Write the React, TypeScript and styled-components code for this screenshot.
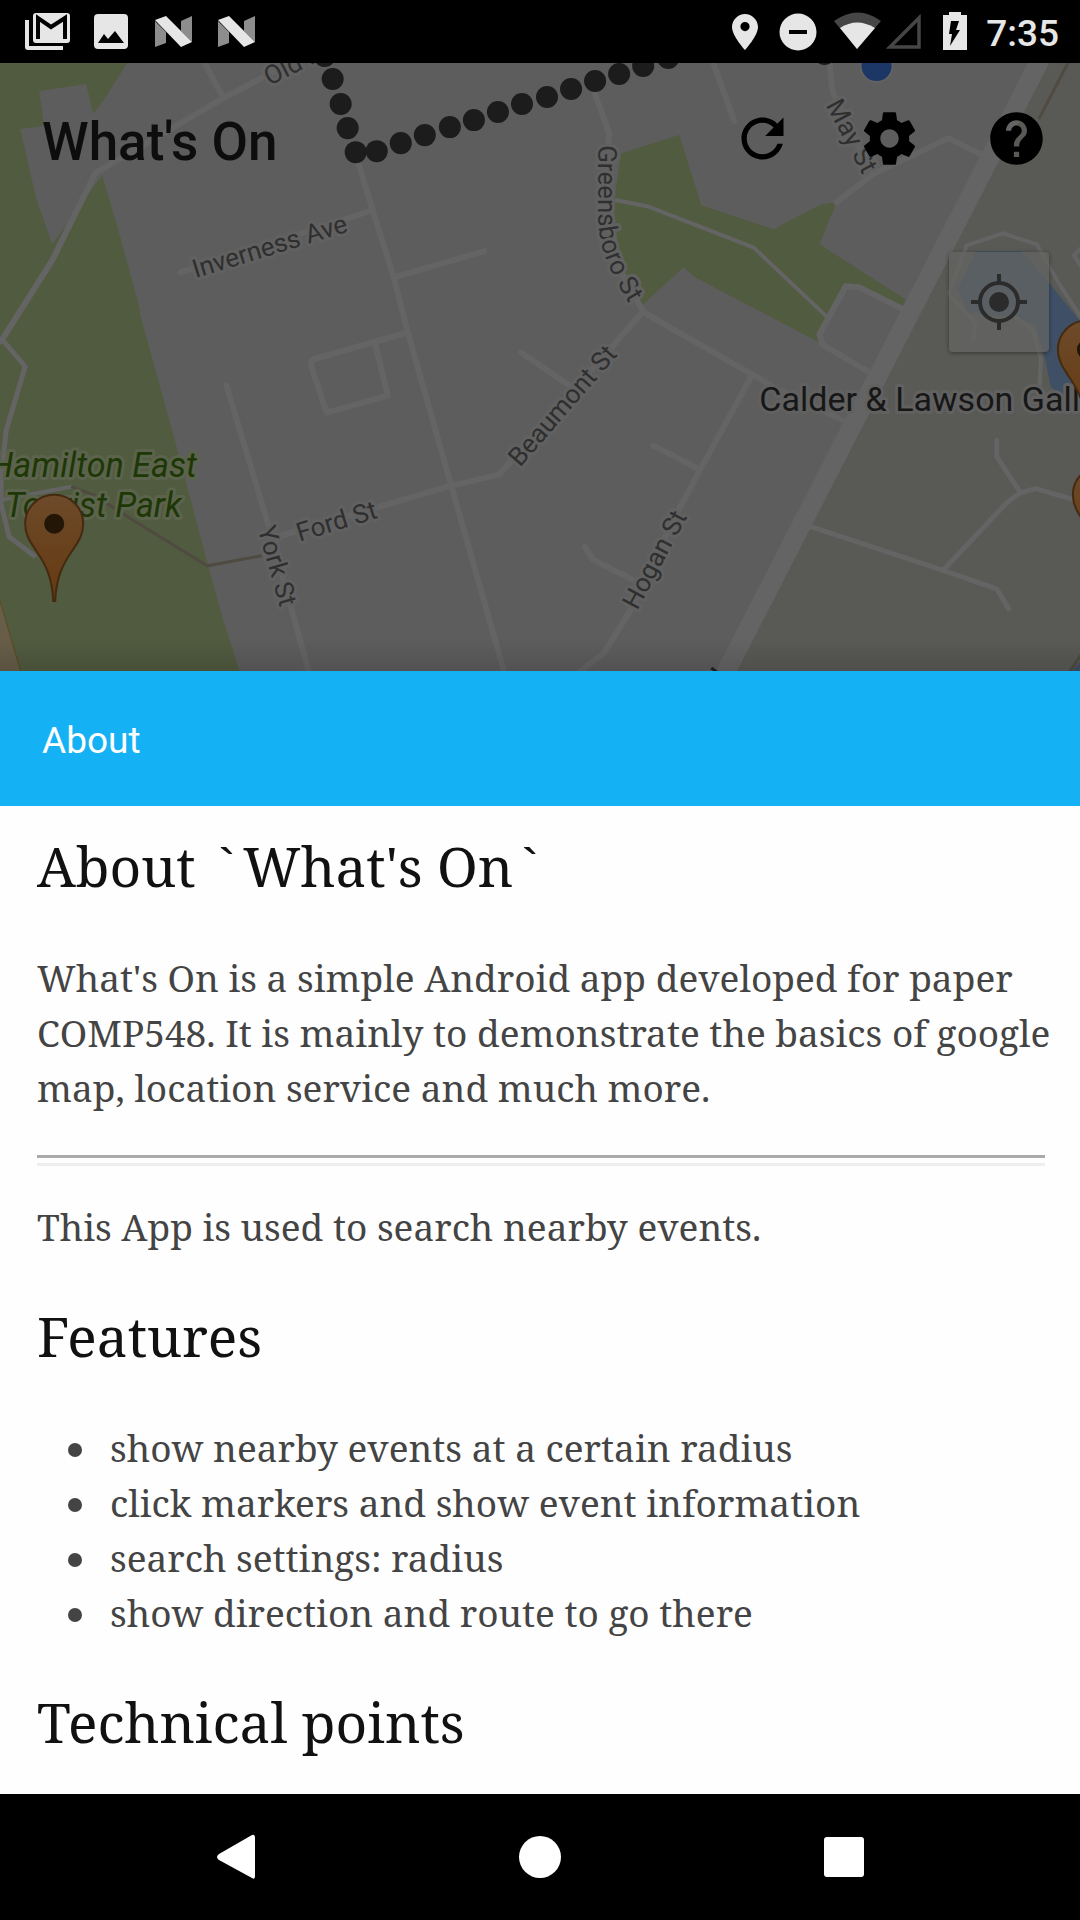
import React from "react";
import styled, { createGlobalStyle } from "styled-components";

const GlobalStyle = createGlobalStyle`
  * { box-sizing: border-box; }
  body { margin: 0; background: #000; font-family: Roboto, "Noto Sans", sans-serif; }
  button { border: 0; padding: 0; background: none; font: inherit; }
`;

const serif = `"Noto Serif", "Droid Serif", "DejaVu Serif Condensed", "DejaVu Serif", serif`;

const Screen = styled.div`
  display: flex;
  flex-direction: column;
  min-height: 100vh;
`;

const StatusBar = styled.header`
  display: flex;
  justify-content: space-between;
  height: 63px;
  padding: 0 21px 0 16px;
  background: #000;
`;

const StatusGroup = styled.div`
  display: flex;
  align-items: center;
`;

const StatusIcon = styled.svg<{ $width?: number }>`
  display: block;
  width: ${(p) => p.$width ?? 63}px;
  height: 63px;
`;

const Clock = styled.time`
  padding-top: 4px;
  color: #e6e6e6;
  font-size: 37px;
  font-weight: 500;
  line-height: 60px;
`;

const MapPanel = styled.section`
  position: relative;
  flex: 1;
  min-height: 400px;
  overflow: hidden;
  background: #5d5d5d;
`;

const MapCanvas = styled.svg`
  position: absolute;
  inset: 0;
  width: 100%;
  height: 100%;
`;

const Toolbar = styled.div`
  position: relative;
  display: flex;
  align-items: center;
  height: 150px;
  padding-left: 42px;
`;

const AppTitle = styled.h1`
  flex: 1;
  margin: 0;
  padding-top: 8px;
  color: #0d0d0d;
  font-size: 53px;
  font-weight: 500;
  line-height: 64px;
`;

const ToolButton = styled.button`
  display: flex;
  align-items: center;
  justify-content: center;
  width: 127px;
  height: 126px;

  svg {
    width: 63px;
    height: 63px;
    fill: #000;
  }
`;

const LocateButton = styled.button`
  position: absolute;
  top: 189px;
  right: 31px;
  display: flex;
  align-items: center;
  justify-content: center;
  width: 100px;
  height: 100px;
  border-radius: 4px;
  background: rgba(100, 100, 99, 0.75);
  box-shadow: 0 1px 4px rgba(0, 0, 0, 0.4);
`;

const MapShade = styled.div`
  position: absolute;
  inset: auto 0 0;
  height: 32px;
  background: linear-gradient(transparent, rgba(0, 0, 0, 0.12));
`;

const Sheet = styled.main`
  background: #fefefe;
`;

const SheetHeader = styled.div`
  display: flex;
  align-items: center;
  height: 135px;
  padding: 4px 42px 0;
  background: #14b2f4;
  color: #fff;
  font-size: 37px;
`;

const Article = styled.article`
  padding: 23px 25px 35px 37px;
  color: #444;
  font-family: ${serif};
  font-size: 37px;
  line-height: 55px;
`;

const Heading = styled.h2`
  margin: 45px 0 47px;
  color: #111;
  font-size: 55px;
  font-weight: 400;
  line-height: 74px;

  &:first-child {
    margin-top: 0;
  }

  &:last-child {
    margin-bottom: 0;
  }
`;

const Tick = styled.span`
  font-family: "Liberation Mono", monospace;
  line-height: 1;
`;

const Paragraph = styled.p`
  margin: 0 0 40px;
`;

const Rule = styled.hr`
  height: 11px;
  margin: 0 10px 33px 0;
  border: solid;
  border-width: 3px 0;
  border-color: #aaa transparent #eee;
`;

const List = styled.ul`
  margin: 0;
  padding-left: 73px;
  list-style: none;
`;

const Item = styled.li`
  position: relative;

  &::before {
    content: "";
    position: absolute;
    left: -42px;
    top: 23px;
    width: 14px;
    height: 14px;
    border-radius: 50%;
    background: #444;
  }
`;

const NavBar = styled.nav`
  display: flex;
  justify-content: center;
  height: 126px;
  background: #000;
`;

const NavButton = styled.button`
  display: flex;
  align-items: center;
  justify-content: center;
  width: 304px;

  svg {
    width: 48px;
    height: 48px;
    fill: #fff;
  }
`;

const Roads = styled.g`
  fill: none;
  stroke: #646464;
  stroke-width: 6px;
  stroke-linecap: round;
  stroke-linejoin: round;
`;

const Parks = styled.g`
  fill: #515b3f;
`;

const StreetName = styled.text`
  fill: #2f2f2f;
  stroke: #616161;
  stroke-width: 6px;
  stroke-linejoin: round;
  paint-order: stroke;
  font-size: 26px;
`;

const PlaceName = styled(StreetName)`
  fill: #171717;
  font-size: 34px;
`;

const ParkName = styled(StreetName)`
  fill: #1e3706;
  stroke: #5b634c;
  font-size: 34px;
  font-style: italic;
  text-anchor: middle;
`;

const routeDots = [
  [325, 56], [333, 79], [341, 104], [348, 128], [356, 152], [377, 151], [401, 143],
  [425, 135], [450, 127], [474, 120], [498, 112], [522, 104], [547, 97], [571, 89],
  [595, 81], [619, 74], [643, 66], [668, 58], [824, 54],
];

const streets = [
  { name: "Old F", x: 270, y: 86, angle: -27 },
  { name: "Inverness Ave", x: 196, y: 278, angle: -17 },
  { name: "Ford St", x: 300, y: 541, angle: -17 },
  { name: "York St", x: 258, y: 528, angle: 74 },
  { name: "Beaumont St", x: 520, y: 467, angle: -49 },
  { name: "Hogan St", x: 637, y: 610, angle: -62 },
  { name: "May St", x: 825, y: 105, angle: 62 },
];

const Marker = ({ x, y }: { x: number; y: number }) => (
  <g transform={`translate(${x} ${y})`}>
    <path
      d="M-1 0C-2-24-9-37-18-50C-24-59-29-66-29-77A29 29 0 0 1 29-77C29-66 24-59 18-50C9-37 2-24 1 0Z"
      fill="url(#pin)"
      stroke="#452a10"
      strokeWidth="2"
    />
    <circle cy="-77" r="10" fill="#241607" />
  </g>
);

const CityMap = () => (
  <MapCanvas viewBox="0 63 1080 607" preserveAspectRatio="xMidYMid slice" role="img" aria-label="Map of nearby events">
    <defs>
      <linearGradient id="pin" x1="0" y1="0" x2="0" y2="1">
        <stop offset="0" stopColor="#6d4a2a" />
        <stop offset="1" stopColor="#653a10" />
      </linearGradient>
      <path id="greensboro" d="M598 145V212C598 248 607 268 638 318" />
    </defs>
    <rect y="63" width="1080" height="607" fill="#5d5d5d" />
    <path d="M1038 63H1080V670H726Z" fill="#595956" />
    <Parks>
      <path d="M0 63H128L103 102L94 114L87 84L40 91L45 126L21 129L37 198L53 244L103 175L119 230L139 303L141 315L176 442L210 570L224 620L240 670H0Z" />
      <path d="M621 153L679 135L701 205L773 229L821 204L836 202L819 244L905 299L902 306L859 287L845 286L819 342L695 277L683 267L643 304L623 275L616 254L614 202Z" />
    </Parks>
    <path d="M859 287L845 286L819 334L822 344L869 372L901 308Z" fill="#5d5d5d" />
    <path d="M-2 590L22 672H-2Z" fill="#675d48" stroke="#5b4b22" />
    <path d="M975 251H1021L1050 285L1078 319L1080 322V400L1062 399L1050 386L1044 357L1035 325L1015 317L967 312L957 289Z" fill="#3e4f66" />
    <path d="M1072 670L1080 660V670Z" fill="#3e4f66" />
    <Roads>
      <path d="M-4 345L3 339L53 260L96 173L224 98L285 66M224 98L205 63" />
      <path d="M3 339L26 366L7 430L2 479L2 503L10 536L35 555" strokeWidth="5" />
      <path d="M3 499L72 486" strokeWidth="4" />
      <path d="M358 161L373 210L394 277L408 332L452 487L504 670M181 272L373 210M394 277L484 251" />
      <path d="M408 332L313 359L311 364L327 412L388 395L375 341" />
      <path d="M227 385L269 525L309 670M274 537L448 486L499 474L643 311M521 352L571 386" />
      <path d="M595 94L609 133L607 160L612 230L620 270L643 311L652 317L752 374L776 388L843 420" />
      <path d="M752 374L700 469L671 523L630 610L604 652L578 672M653 445L700 469M585 546L593 559L637 581" />
      <path d="M713 63L734 121M829 63L832 91L852 135L872 173M836 202L874 173L948 138L982 155" />
      <path d="M616 200L647 206L753 247L826 316" strokeWidth="4" />
      <path d="M901 308L859 287L845 286L819 334L822 344L869 372" />
      <path d="M805 524L941 569L996 588L1008 608M943 569L1007 501L1020 492L1035 488L1084 502M996 440V456L1019 491" strokeWidth="5" />
      <path d="M972 339L975 323L948 293L966 245L1002 233L1036 244L1058 283L1080 317M1015 317L1032 329L1040 359L1039 384M1080 248L1073 255L1080 266" strokeWidth="4" />
    </Roads>
    <path d="M1048 43L722 678" stroke="#646464" strokeWidth="19" />
    <g fill="none" stroke="#504b40" strokeWidth="3">
      <path d="M72 486L96 495L133 519L208 565L262 555" />
      <path d="M1067 63L1038 119M1068 672L1080 654" />
    </g>
    <path d="M711 667L718 672" stroke="#222" strokeWidth="3" />
    {streets.map((s) => (
      <StreetName key={s.name} transform={`translate(${s.x} ${s.y}) rotate(${s.angle})`}>
        {s.name}
      </StreetName>
    ))}
    {routeDots.map(([x, y]) => (
      <circle key={`${x}-${y}`} cx={x} cy={y} r="11" fill="#1c1c1c" />
    ))}
    <circle cx="876" cy="66" r="16" fill="#1c3766" stroke="#626262" strokeWidth="2" />
    <StreetName>
      <textPath href="#greensboro">Greensboro St</textPath>
    </StreetName>
    <PlaceName x="759" y="410">Calder &amp; Lawson Gallery</PlaceName>
    <ParkName x="94" y="476">Hamilton East</ParkName>
    <ParkName x="94" y="516">Tourist Park</ParkName>
    <Marker x={55} y={600} />
    <Marker x={1086} y={426} />
    <Marker x={1101} y={571} />
  </MapCanvas>
);

const NougatIcon = () => (
  <StatusIcon viewBox="0 0 63 63">
    <path d="M13 21L24 32V43L13 47ZM39 21L50 16V42L39 31Z" fill="#8d8d8d" />
    <path d="M13 20L24 16L50 42L39 47Z" fill="#e6e6e6" />
  </StatusIcon>
);

export default function App() {
  return (
    <>
      <GlobalStyle />
      <Screen>
        <StatusBar>
          <StatusGroup>
            <StatusIcon viewBox="0 0 63 63">
              <path d="M9 20H13V46H47V50H12Q9 50 9 47Z" fill="#e6e6e6" />
              <rect x="17" y="13" width="37" height="30" rx="3" fill="#e6e6e6" />
              <path d="M22 39V18L35 27L49 18V39" fill="none" stroke="#000" strokeWidth="4" />
            </StatusIcon>
            <StatusIcon viewBox="0 0 63 63">
              <rect x="15" y="14" width="34" height="35" rx="4" fill="#e6e6e6" />
              <path d="M19 43L25 34L29 39L36 31L45 43Z" fill="#000" />
            </StatusIcon>
            <NougatIcon />
            <NougatIcon />
          </StatusGroup>
          <StatusGroup>
            <StatusIcon $width={53} viewBox="0 0 53 63" fill="#e6e6e6">
              <path d="M27 14C20 14 14 20 14 27C14 36 27 50 27 50S40 36 40 27C40 20 34 14 27 14ZM27 22A4.600 4.600 0 1 1 27 31.200A4.600 4.600 0 1 1 27 22Z" />
            </StatusIcon>
            <StatusIcon $width={60} viewBox="0 0 60 63">
              <circle cx="27" cy="32" r="18.500" fill="#e6e6e6" />
              <path d="M18 32H36" stroke="#000" strokeWidth="4" />
            </StatusIcon>
            <StatusIcon $width={54} viewBox="0 0 54 63">
              <path d="M3 21Q27 4 50 21L26 49Z" fill="#464646" />
              <path d="M9 28Q26 17 44 28L26 49Z" fill="#e6e6e6" />
            </StatusIcon>
            <StatusIcon $width={38} viewBox="0 0 38 63">
              <path d="M5 47H34V18Z" fill="none" stroke="#464646" strokeWidth="3.500" />
            </StatusIcon>
            <StatusIcon $width={63} viewBox="0 0 63 63">
              <path d="M20 15H26V12H38V15H44V50H20Z" fill="#e6e6e6" />
              <path d="M28 21H36L33 30H37L27 46L29 34H26Z" fill="#000" />
            </StatusIcon>
            <Clock>7:35</Clock>
          </StatusGroup>
        </StatusBar>

        <MapPanel>
          <CityMap />
          <MapShade />
          <Toolbar>
            <AppTitle>What's On</AppTitle>
            <ToolButton aria-label="Refresh">
              <svg viewBox="0 0 24 24">
                <path d="M17.650 6.350C16.200 4.900 14.210 4 12 4c-4.420 0-7.990 3.580-7.990 8s3.570 8 7.990 8c3.730 0 6.840-2.550 7.730-6h-2.080c-.82 2.330-3.040 4-5.650 4-3.310 0-6-2.690-6-6s2.690-6 6-6c1.660 0 3.140.69 4.220 1.780L13 11h7V4l-2.350 2.350z" />
              </svg>
            </ToolButton>
            <ToolButton aria-label="Settings">
              <svg viewBox="0 0 24 24">
                <path d="M19.430 12.980c.04-.32.07-.64.07-.98s-.03-.66-.07-.98l2.110-1.650c.19-.15.24-.42.12-.64l-2-3.460c-.12-.22-.39-.3-.61-.22l-2.490 1c-.52-.4-1.080-.73-1.690-.98l-.38-2.650C14.460 2.180 14.250 2 14 2h-4c-.25 0-.46.18-.49.42l-.38 2.650c-.61.25-1.170.59-1.690.98l-2.490-1c-.23-.09-.49 0-.61.22l-2 3.460c-.13.22-.07.49.12.64l2.110 1.650c-.04.32-.07.65-.07.98s.03.66.07.98l-2.110 1.650c-.19.15-.24.42-.12.64l2 3.460c.12.22.39.3.61.22l2.490-1c.52.4 1.080.73 1.690.98l.38 2.650c.03.24.24.42.49.42h4c.25 0 .46-.18.49-.42l.38-2.650c.61-.25 1.170-.59 1.690-.98l2.490 1c.23.09.49 0 .61-.22l2-3.460c.12-.22.07-.49-.12-.64l-2.110-1.650zM12 15.500c-1.930 0-3.500-1.570-3.500-3.500s1.570-3.500 3.500-3.500 3.500 1.570 3.500 3.500-1.570 3.500-3.500 3.500z" />
              </svg>
            </ToolButton>
            <ToolButton aria-label="Help">
              <svg viewBox="0 0 24 24">
                <path d="M12 2C6.480 2 2 6.480 2 12s4.480 10 10 10 10-4.480 10-10S17.520 2 12 2zm1 17h-2v-2h2v2zm2.070-7.750l-.9.920C13.450 12.900 13 13.500 13 15h-2v-.5c0-1.100.45-2.100 1.170-2.830l1.240-1.260c.37-.36.59-.86.59-1.410 0-1.100-.9-2-2-2s-2 .9-2 2H8c0-2.210 1.790-4 4-4s4 1.790 4 4c0 .88-.36 1.680-.93 2.250z" />
              </svg>
            </ToolButton>
          </Toolbar>
          <LocateButton aria-label="My location">
            <svg width="60" height="60" viewBox="0 0 60 60" fill="none" stroke="#2b2b2b" strokeWidth="4">
              <circle cx="30" cy="30" r="19" />
              <circle cx="30" cy="30" r="10" fill="#2b2b2b" stroke="none" />
              <path d="M30 2V11M30 49V58M2 30H11M49 30H58" />
            </svg>
          </LocateButton>
        </MapPanel>

        <Sheet>
          <SheetHeader>About</SheetHeader>
          <Article>
            <Heading>
              About <Tick>`</Tick>What's On<Tick>`</Tick>
            </Heading>
            <Paragraph>
              What's On is a simple Android app developed for paper COMP548. It is mainly to demonstrate the
              basics of google map, location service and much more.
            </Paragraph>
            <Rule />
            <Paragraph>This App is used to search nearby events.</Paragraph>
            <Heading>Features</Heading>
            <List>
              <Item>show nearby events at a certain radius</Item>
              <Item>click markers and show event information</Item>
              <Item>search settings: radius</Item>
              <Item>show direction and route to go there</Item>
            </List>
            <Heading>Technical points</Heading>
          </Article>
        </Sheet>

        <NavBar>
          <NavButton aria-label="Back">
            <svg viewBox="0 0 48 48"><path d="M40 2Q43 1 43 5V43Q43 47 40 45L7 27Q3 24 7 21Z" /></svg>
          </NavButton>
          <NavButton aria-label="Home">
            <svg viewBox="0 0 48 48"><circle cx="24" cy="24" r="21" /></svg>
          </NavButton>
          <NavButton aria-label="Recent apps">
            <svg viewBox="0 0 48 48"><rect x="4" y="4" width="40" height="40" rx="3" /></svg>
          </NavButton>
        </NavBar>
      </Screen>
    </>
  );
}
